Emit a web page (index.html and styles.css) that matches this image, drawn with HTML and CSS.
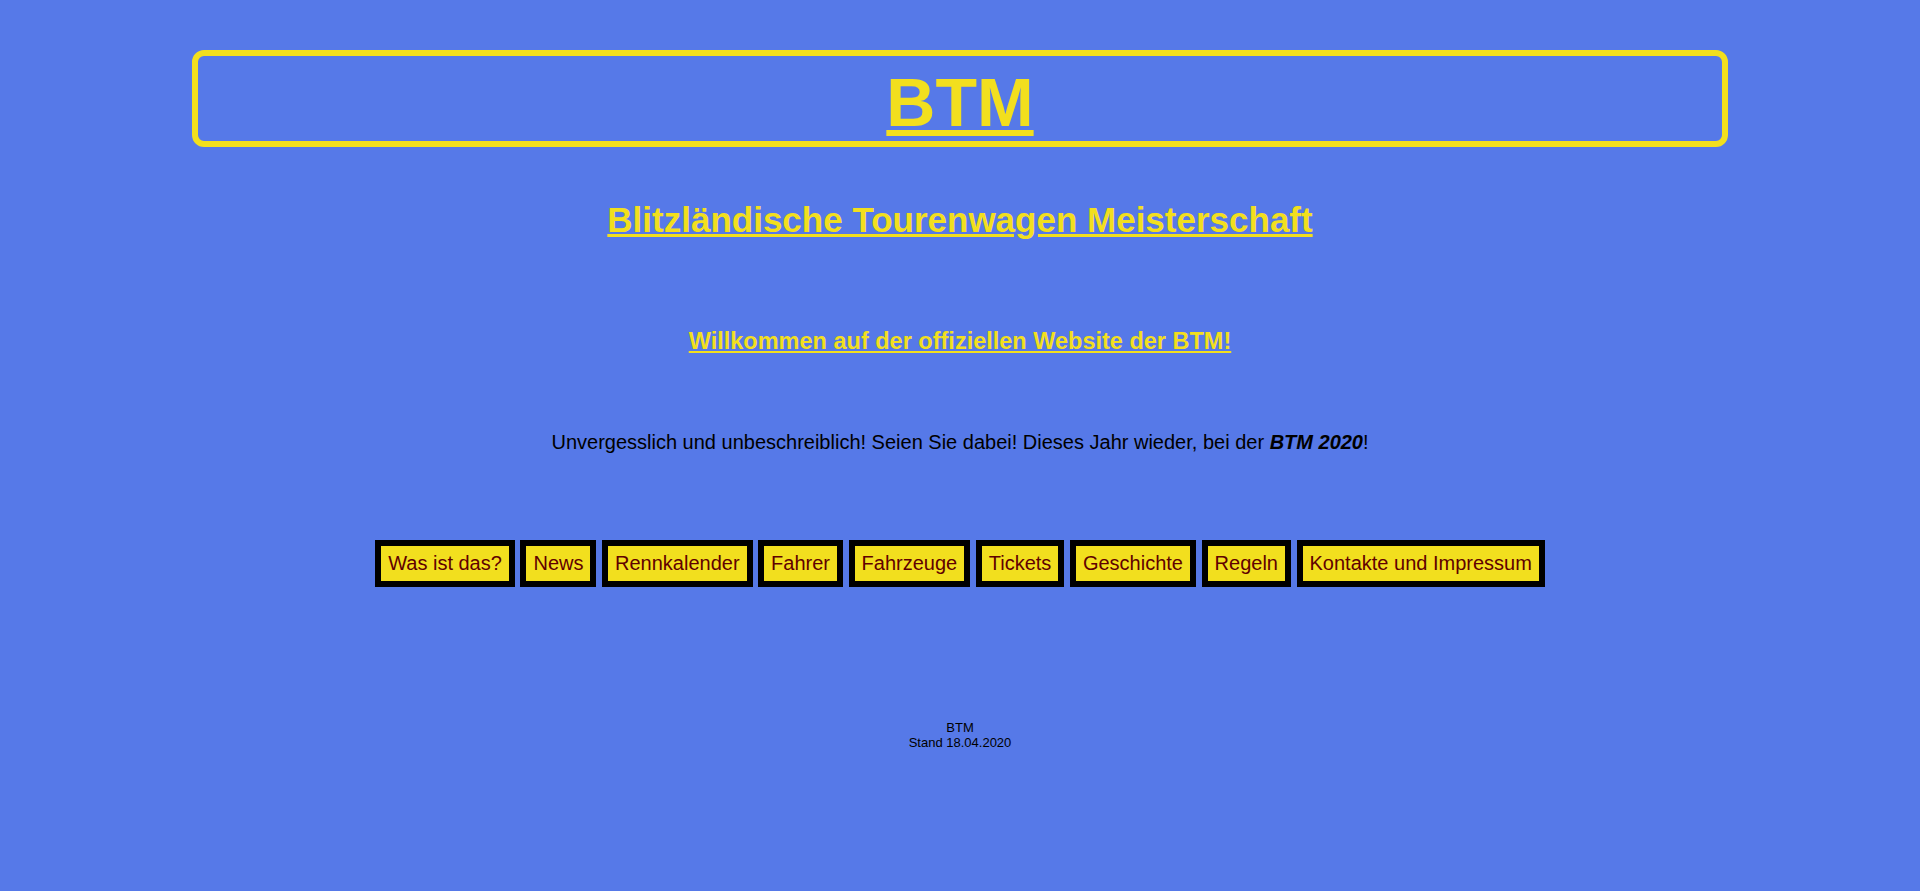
FILE: index.html
```html
<!DOCTYPE html>
<html lang="de">
<head>
<meta charset="utf-8">
<title>BTM - Blitzländische Tourenwagen Meisterschaft</title>
<link rel="stylesheet" href="styles.css">
</head>
<body>
<header class="masthead">
  <h1 class="logo">BTM</h1>
</header>
<h2 class="title">Blitzländische Tourenwagen Meisterschaft</h2>
<h3 class="welcome">Willkommen auf der offiziellen Website der BTM!</h3>
<p class="intro">Unvergesslich und unbeschreiblich! Seien Sie dabei! Dieses Jahr wieder, bei der <b><i>BTM 2020</i></b>!</p>
<nav class="menu">
  <a class="menu-item" href="#">Was ist das?</a>
  <a class="menu-item" href="#">News</a>
  <a class="menu-item" href="#">Rennkalender</a>
  <a class="menu-item" href="#">Fahrer</a>
  <a class="menu-item" href="#">Fahrzeuge</a>
  <a class="menu-item" href="#">Tickets</a>
  <a class="menu-item" href="#">Geschichte</a>
  <a class="menu-item" href="#">Regeln</a>
  <a class="menu-item" href="#">Kontakte und Impressum</a>
</nav>
<footer class="footer">BTM<br>Stand 18.04.2020</footer>
</body>
</html>
```
FILE: styles.css
```css
html, body {
  margin: 0;
  padding: 0;
}

body {
  background: #5679e8;
  color: #000;
  font-family: "Liberation Sans", Arial, sans-serif;
  text-align: center;
  padding-top: 50px;
}

.masthead {
  box-sizing: border-box;
  width: 80%;
  margin: 0 auto;
  border: 6px solid #f2df1e;
  border-radius: 12px;
  padding-top: 7px;
}

.logo {
  margin: 0;
  font-size: 68px;
  font-weight: bold;
  line-height: normal;
  color: #f2df1e;
  text-decoration: underline;
}

.title {
  margin: 52.5px 0 0;
  font-size: 35px;
  font-weight: bold;
  line-height: normal;
  color: #f2df1e;
  text-decoration: underline;
}

.welcome {
  margin: 88px 0 0;
  font-size: 23.5px;
  font-weight: bold;
  line-height: normal;
  color: #f2df1e;
  text-decoration: underline;
}

.intro {
  margin: 76.5px 0 0;
  font-size: 20px;
  line-height: normal;
}

.menu {
  margin-top: 85.5px;
  font-size: 20px;
  line-height: normal;
}

.menu-item {
  display: inline-block;
  border: 6px solid #000;
  padding: 6px 7px;
  background: #f2df1e;
  color: #600000;
  text-decoration: none;
}

.footer {
  margin-top: 133px;
  font-size: 13px;
  line-height: normal;
}
```
